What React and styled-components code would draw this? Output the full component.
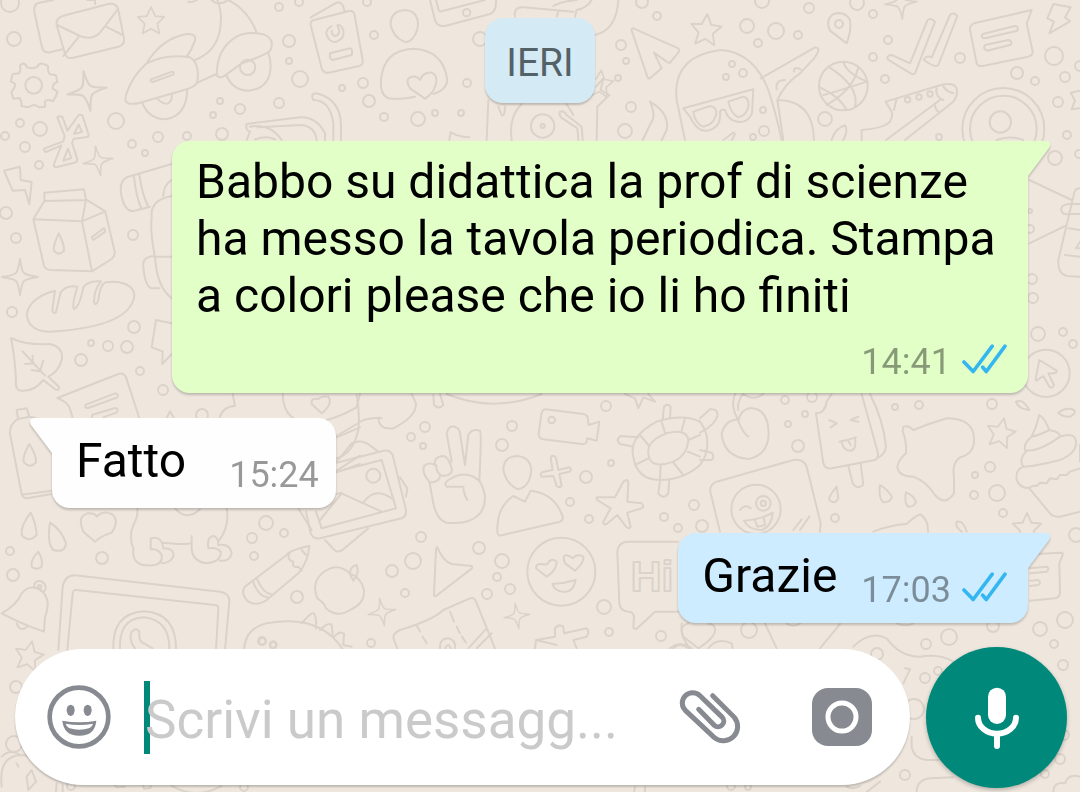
import { useState } from 'react';
import styled, { createGlobalStyle } from 'styled-components';

const GlobalStyle = createGlobalStyle`
  * {
    box-sizing: border-box;
  }

  body {
    margin: 0;
    background: #efe7de;
    font-family: Roboto, "Liberation Sans", sans-serif;
  }
`;

const Screen = styled.div`
  position: relative;
  display: flex;
  flex-direction: column;
  min-height: 100vh;
  overflow: hidden;
`;

const Doodles = styled.svg`
  position: absolute;
  top: 0;
  left: 0;
  z-index: 0;
  fill: none;
  stroke: #dbd3ca;
  stroke-width: 6;
  stroke-linecap: round;
  stroke-linejoin: round;
  pointer-events: none;
`;

const Chat = styled.main`
  position: relative;
  flex: 1;
  display: flex;
  flex-direction: column;
  gap: 25px;
  padding: 18px 52px 24px;
`;

const DateChip = styled.time`
  align-self: center;
  margin-bottom: 13px;
  padding: 23px 21px 17px;
  border-radius: 18px;
  background: #d4eaf4;
  box-shadow: 0 2px 2px rgba(0, 0, 0, 0.2);
  color: #546166;
  font-size: 39px;
  line-height: 45px;
`;

const Bubble = styled.article`
  position: relative;
  display: flex;
  flex-direction: ${(p) => (p.$stacked ? 'column' : 'row')};
  align-self: ${(p) => (p.$mine ? 'flex-end' : 'flex-start')};
  column-gap: ${(p) => (p.$mine ? '24px' : '43px')};
  row-gap: 16px;
  max-width: calc(100% - 120px);
  padding: ${(p) => (p.$stacked ? '12px 21px 9px 24px' : p.$mine ? '14px 21px 11px 24px' : '14px 17px 11px 24px')};
  border-radius: ${(p) => (p.$mine ? '18px 0 18px 18px' : '0 18px 18px 18px')};
  background: ${(p) => p.$color};
  filter: drop-shadow(0 2px 1px rgba(0, 0, 0, 0.2));
`;

const Tail = styled.svg`
  position: absolute;
  top: 0;
  ${(p) => (p.$mine ? 'right: -22px;' : 'left: -22px; transform: scaleX(-1);')}
  width: 23px;
  height: 36px;
  fill: ${(p) => p.$color};
`;

const Text = styled.p`
  margin: 0;
  color: #000;
  font-size: 48px;
  line-height: 57px;
`;

const Meta = styled.div`
  display: flex;
  align-items: center;
  align-self: flex-end;
  gap: 11px;
  margin-top: ${(p) => (p.$stacked ? '0' : '21px')};
  color: rgba(0, 0, 0, 0.4);
  font-size: 36px;
  line-height: 44px;
`;

const Ticks = styled.svg`
  width: 45px;
  height: 30px;
  margin-bottom: 6px;
  fill: none;
  stroke: #34b7f1;
  stroke-width: 11;
  stroke-linecap: round;
  stroke-linejoin: round;
`;

const Footer = styled.form`
  position: relative;
  display: flex;
  align-items: flex-start;
  gap: 16px;
  padding: 0 13px 4px 15px;
`;

const Composer = styled.div`
  flex: 1;
  min-width: 0;
  display: flex;
  align-items: center;
  height: 136px;
  margin-top: 2px;
  padding: 0 38px 0 32px;
  border-radius: 68px;
  background: #fff;
  box-shadow: 0 2px 2px rgba(0, 0, 0, 0.2);
`;

const IconButton = styled.button`
  display: flex;
  flex: none;
  margin: 0;
  padding: 0;
  border: 0;
  background: none;
  color: #878b91;
  cursor: pointer;
`;

const Field = styled.label`
  position: relative;
  flex: 1;
  min-width: 0;
  margin: 0 16px 0 33px;

  &::before {
    content: '';
    position: absolute;
    top: 1px;
    left: 0;
    width: 6px;
    height: 73px;
    background: #00897b;
  }
`;

const Input = styled.input`
  position: relative;
  display: block;
  width: 100%;
  height: 74px;
  padding: 6px 0 0 1px;
  border: 0;
  outline: 0;
  background: transparent;
  color: #000;
  caret-color: transparent;
  font: 53px/68px Roboto, "Liberation Sans", sans-serif;

  &::placeholder {
    color: #cacaca;
    opacity: 1;
  }
`;

const Tools = styled.div`
  display: flex;
  align-items: center;
  gap: 69px;
`;

const MicButton = styled.button`
  display: flex;
  flex: none;
  align-items: center;
  justify-content: center;
  width: 141px;
  height: 141px;
  padding: 0;
  border: 0;
  border-radius: 50%;
  background: #00897b;
  box-shadow: 0 2px 4px rgba(0, 0, 0, 0.25);
  cursor: pointer;
`;

const messages = [
  {
    id: 1,
    mine: true,
    stacked: true,
    color: '#e1ffc7',
    text: 'Babbo su didattica la prof di scienze ha messo la tavola periodica. Stampa a colori please che io li ho finiti',
    time: '14:41',
  },
  { id: 2, mine: false, color: '#fefefe', text: 'Fatto', time: '15:24' },
  { id: 3, mine: true, color: '#cdecff', text: 'Grazie', time: '17:03' },
];

// x, y, radius
const dots = [
  [10, 3, 9], [14, 39, 7], [116, 121, 8], [40, 129, 7], [20, 123, 4], [5, 136, 4], [25, 147, 5], [39, 165, 4],
  [158, 137, 5], [132, 144, 4], [145, 153, 3], [187, 136, 4], [222, 134, 6], [220, 101, 3], [240, 109, 5], [213, 115, 3],
  [279, 103, 5], [279, 7, 4], [299, 2, 4], [289, 41, 6], [289, 61, 3], [300, 79, 8], [342, 88, 3], [363, 83, 5],
  [374, 35, 4], [369, 101, 6], [384, 117, 4], [418, 119, 7], [435, 113, 3], [461, 113, 3], [467, 83, 4], [480, 39, 7],
  [367, 2, 4], [6, 213, 6], [16, 238, 5], [133, 235, 5], [12, 312, 5], [134, 327, 6], [127, 347, 6], [108, 346, 5],
  [91, 343, 3], [81, 360, 6], [140, 371, 4], [163, 390, 5], [202, 415, 6],
  [642, 2, 6], [657, 16, 4], [621, 45, 5], [626, 61, 3], [618, 78, 3], [631, 107, 5], [625, 131, 7],
  [762, 1, 7], [747, 26, 7], [776, 31, 8], [798, 35, 4], [758, 43, 4], [809, 8, 5], [873, 14, 4], [857, 3, 7],
  [888, 40, 4], [873, 57, 4], [885, 79, 4], [825, 119, 7], [764, 131, 5], [763, 110, 3], [753, 137, 3], [960, 58, 5],
  [1054, 56, 9], [1017, 73, 6], [1035, 81, 4], [1065, 77, 5], [1058, 102, 5], [1067, 135, 4], [1055, 158, 7], [1079, 154, 4],
  [732, 64, 3], [743, 73, 4], [726, 77, 3], [939, 137, 3], [1080, 66, 5],
  [1030, 229, 4], [1032, 279, 5], [1033, 298, 5], [1038, 334, 7], [1063, 332, 4], [1073, 344, 4], [1030, 211, 2],
  [411, 437, 4], [425, 427, 5], [423, 446, 3], [512, 426, 5], [502, 445, 6], [606, 406, 5], [611, 463, 3], [586, 477, 6],
  [570, 502, 4], [589, 519, 4], [694, 505, 5], [664, 517, 4], [678, 528, 4], [421, 537, 5], [479, 548, 6], [413, 561, 8],
  [392, 571, 6], [405, 593, 4], [502, 561, 7], [497, 577, 4], [510, 589, 5], [487, 594, 5], [604, 607, 7], [371, 643, 4],
  [609, 632, 4], [661, 636, 5],
  [785, 400, 4], [812, 397, 5], [805, 414, 3], [788, 424, 3], [798, 446, 6], [895, 407, 3], [919, 405, 4], [992, 404, 5],
  [990, 467, 5], [975, 475, 3], [974, 495, 4], [997, 493, 8], [1003, 513, 4], [835, 518, 4], [702, 526, 6], [1076, 535, 7],
  [266, 523, 7], [252, 538, 5], [284, 533, 4], [254, 556, 4], [297, 597, 6], [102, 558, 6], [10, 551, 4], [13, 575, 6],
  [16, 687, 6], [14, 744, 8], [262, 641, 4], [273, 645, 3],
  [749, 630, 8], [926, 644, 5], [949, 637, 8], [1040, 629, 7], [1065, 620, 8], [1054, 644, 4], [1063, 665, 5],
  [877, 654, 6], [925, 678, 5], [938, 671, 4], [914, 709, 10], [905, 775, 5], [1060, 759, 5], [993, 626, 6],
  [1064, 735, 5], [731, 786, 4], [748, 787, 3], [71, 786, 4], [244, 787, 4], [1045, 774, 4],
];

// x, y, radius, rotation
const sparkles = [
  [87, 91, 20, -10], [98, 161, 15, -10], [20, 277, 18, 0], [901, 3, 16, -5], [382, 612, 14, -10], [517, 616, 13, -8],
];

// x, y, radius, rotation
const stars = [
  [151, 21, 14, 0], [706, 30, 16, 5], [1001, 433, 15, 12], [29, 656, 15, 12], [1027, 528, 15, 0], [600, 84, 14, 5],
];

function Wallpaper() {
  return (
    <Doodles width="1080" height="792" viewBox="0 0 1080 792" aria-hidden="true">
      <g strokeWidth="1.9">
        {dots.map(([x, y, r]) => (
          <circle key={`${x}-${y}`} cx={x} cy={y} r={r} />
        ))}
      </g>
      {sparkles.map(([x, y, r, a]) => (
        <path
          key={`${x}-${y}`}
          transform={`translate(${x} ${y}) rotate(${a}) scale(${r / 20})`}
          strokeWidth="2.2"
          d="M0 -20Q2 -5 5 -4Q8 -2 20 0Q6 2 4 5Q2 8 0 20Q-2 6 -5 4Q-8 2 -20 0Q-6 -2 -4 -5Q-2 -8 0 -20Z"
        />
      ))}
      {stars.map(([x, y, r, a]) => (
        <path
          key={`${x}-${y}`}
          transform={`translate(${x} ${y}) rotate(${a}) scale(${r / 20})`}
          strokeWidth="2.4"
          d="M0 -20L6 -7L19 -6L9 4L12 18L0 11L-12 18L-9 4L-19 -6L-6 -7Z"
        />
      ))}

      {/* mail, scooter, gear, milk, headphones */}
      <g transform="scale(.33333)">
        <path d="M188 148L150 157Q130 160 126 142L103 35Q100 12 118 8L160 0M262 0L285 0V12" />
        <path d="M190 47L325 12Q350 8 355 30L372 115Q375 135 355 140L220 173Q198 178 194 158L170 75Q167 55 190 47ZM172 75L240 108Q275 122 300 98L352 30M190 168L235 112M368 105L318 80" />
        <path d="M385 310Q372 305 378 285Q395 230 440 190Q500 160 570 172Q600 190 592 245Q590 258 560 268L420 308Q400 314 385 310ZM453 238L516 215Q524 216 520 224L458 246Q448 244 453 238Z" />
        <path d="M440 190Q485 115 560 102Q590 100 585 122Q575 150 560 170M428 310Q445 355 495 358Q560 350 562 268M472 296Q490 315 505 310Q518 300 515 284" />
        <path d="M585 180Q665 150 663 50Q660 20 652 0M685 0Q745 30 770 98M635 0Q655 20 685 0M565 5Q580 8 590 0M592 248L650 222" />
        <path d="M650 225Q655 235 670 230L725 190Q800 165 812 150Q825 115 790 103Q740 92 710 110Q650 145 650 225ZM680 228Q700 272 745 272Q810 265 812 200Q812 180 805 158" />
        <circle cx="743" cy="202" r="23" />
        <circle cx="101" cy="256" r="25" />
        <path d="M68 190Q78 192 82 202Q101 208 112 200Q118 188 128 191L144 198Q142 212 148 222L168 226L172 246Q156 252 158 266L172 274Q170 290 158 304Q142 296 134 304L136 320L116 322Q104 308 86 322L64 318Q66 304 58 294L40 296L34 276Q46 262 46 252L32 244L38 222L58 220Q64 208 60 196Z" />
        <path d="M172 352Q180 346 188 352L202 392L236 345Q244 342 248 348L266 405Q266 412 258 412L222 416L216 428L232 478Q232 486 224 488L168 502Q160 500 162 492L184 436L138 456Q130 454 132 446L190 424L194 408ZM236 374L246 396L222 402ZM204 446L214 474L190 482Z" />
        <path d="M12 512L60 500L62 540L95 546L88 612L75 570L38 572Z" />
        <path d="M133 578L252 568L258 600L133 603ZM133 603L100 658L246 664L258 600M100 658L132 798Q136 808 150 810L276 814L246 664M258 598L316 634L246 664M316 634L344 755Q345 770 335 777L276 814M275 712L312 684L316 695L280 720ZM176 700Q158 740 162 752Q176 770 192 752Q194 735 176 700Z" />
        <path d="M515 492L380 532Q355 545 365 590Q375 635 400 633L450 620M402 530Q408 590 425 628M418 525Q428 590 445 620M515 540Q490 555 490 588M515 588Q450 600 455 650Q450 700 465 770L515 770M465 768Q425 770 430 800Q435 860 455 865L478 865M465 770Q470 860 515 895" />
      </g>

      {/* phone book, face, cassette top */}
      <g transform="translate(170) scale(.33333)">
        <path d="M432 60L540 32Q550 32 553 42L578 180Q580 195 568 198L475 218Q460 220 455 205L422 75Q420 62 432 60ZM422 52L500 8Q515 5 520 20L524 36M480 160L540 145Q548 146 546 160L545 165L488 180Q478 178 480 160Z" />
        <path d="M485 78Q465 90 470 105Q480 130 500 125Q525 115 520 90Q512 72 502 76L508 92Q508 105 495 108Q482 104 486 92" />
        <path d="M703 30Q660 35 662 75Q670 110 700 124Q715 130 728 115Q748 90 743 60Q735 30 703 30ZM650 292Q630 280 633 240Q640 150 730 146Q820 150 832 240Q830 270 790 282M650 292Q665 302 735 290M765 296L720 265Q705 240 720 232Q740 225 750 240Q760 215 785 218Q805 225 797 255Q790 280 765 296Z" />
        <path d="M780 0L795 60Q800 80 825 78L960 42Q980 35 978 0M798 0L806 30Q808 36 815 34L945 0" />
        <circle cx="890" cy="38" r="11" />
        <path d="M230 372L390 352Q440 350 465 400V420M230 372Q225 390 240 395L230 420M240 380Q300 370 335 420M262 382L395 375Q435 380 440 420M255 418Q290 405 315 418M430 300Q420 280 440 280Q515 300 513 380V420M430 300Q480 300 490 370V420M955 300L950 420M838 420L842 396Q860 410 898 412" />
      </g>

      {/* vinyl, paper plane, hood */}
      <g transform="translate(360) scale(.33333)">
        <path d="M465 50Q460 20 490 22L640 35M580 18Q600 5 650 0M590 50L595 35M645 50L650 30Q680 25 695 0M705 105Q770 90 775 0M415 320L425 345Q435 350 435 320M455 420Q445 350 485 312M620 312L640 345M600 335Q610 330 620 345L665 380L668 420M600 335Q595 350 612 358L652 385L655 420M710 420L712 320L748 285L722 270L730 235L708 260" />
        <circle cx="548" cy="378" r="35" />
        <circle cx="548" cy="378" r="6" />
        <path d="M820 85L955 145Q960 150 955 158L930 188Q925 190 920 185L882 158L905 205L870 235Q865 238 862 230L815 92Q814 84 820 85ZM870 305Q930 340 920 390L905 420M870 305Q890 350 872 370L848 420" />
        <path d="M975 420L950 300Q935 170 1080 150Q1180 155 1225 270Q1248 340 1265 420M970 325L1180 268L1176 340Q1165 365 1140 366Q1105 365 1095 330Q1085 325 1080 335Q1085 385 1040 392Q1010 395 990 350ZM1000 335L1050 318Q1072 320 1068 345Q1060 375 1030 380Q1005 372 1000 335ZM1105 305L1150 290Q1168 292 1165 320Q1158 348 1135 352Q1112 340 1105 305Z" />
      </g>

      {/* pin, ball, ticks, message, sneaker */}
      <g transform="translate(720) scale(.33333)">
        <path d="M380 130L330 92Q315 60 340 42Q375 32 390 60Q395 90 380 130Z" />
        <circle cx="357" cy="72" r="12" />
        <path d="M122 235L285 142Q298 142 294 155L285 172L240 220Q195 250 172 300Q280 300 282 420M172 300L190 420M170 268Q165 240 195 240M222 215Q220 198 242 208" />
        <circle cx="370" cy="258" r="73" />
        <path d="M325 200Q420 260 405 320M300 262Q360 290 380 330M415 202Q400 270 320 315M440 245Q350 275 310 285M370 186Q380 220 442 245" />
        <path d="M503 178Q500 165 515 165L570 190L622 62Q630 50 645 65L585 220Q580 225 572 220ZM612 180Q615 165 635 172L690 45Q700 35 712 48L655 195Q645 205 612 180Z" />
        <path d="M935 30L762 70Q748 75 750 90L770 190Q775 200 788 198L925 170Q940 165 938 155L920 70ZM788 102L885 78Q898 80 892 92L795 115Q780 113 788 102ZM795 135L865 120Q880 124 872 134L802 152Q788 148 795 135Z" />
        <path d="M1000 12L1052 22L1035 52L1050 64L988 100L1002 65L982 55Z" />
        <path d="M425 420L425 390Q490 385 510 365Q520 345 515 335L497 305L640 262Q700 240 710 265Q715 285 700 305L555 420M530 295L522 330M650 265Q645 290 670 300M670 260Q680 275 700 280M498 420L660 300M645 310Q645 330 655 335M335 420Q345 385 375 376Q385 390 370 420M10 420L40 398Q50 400 35 420" />
        <circle cx="563" cy="299" r="8" />
        <circle cx="597" cy="291" r="8" />
        <circle cx="630" cy="282" r="8" />
        <circle cx="850" cy="387" r="123" />
        <circle cx="850" cy="387" r="100" />
        <path d="M830 420Q870 405 910 420" />
        <circle cx="841" cy="366" r="32" />
        <path d="M1080 272L1052 278L1065 302L1055 328L1080 325M928 540L1055 600M928 730L1035 678M1080 565Q1062 565 1060 590L1015 780Q1012 820 1040 828L1080 830M1045 612Q1020 615 1024 632Q1028 645 1045 642H1080M1045 612H1080M1045 685L1080 690M1035 765L1080 770M1080 725L1068 745L1080 745" />
      </g>

      {/* bread, leaf, note, bottle */}
      <g transform="translate(0 264) scale(.33333)">
        <path d="M165 80Q90 100 80 150Q85 210 170 202Q330 190 380 140Q420 95 390 68Q360 48 318 55Q300 60 295 110Q285 130 282 112Q283 75 303 52Q265 48 250 70Q238 130 222 135Q215 125 232 68Q200 62 182 85L168 145Q155 152 158 130L165 80" />
        <path d="M33 222Q80 245 150 240Q190 250 186 285Q175 325 145 338L178 370Q178 380 165 376L130 348Q100 385 62 380Q45 378 48 350Q45 280 33 222ZM68 262L135 335M75 300L102 298M95 318L120 322L130 290M98 298V275" />
        <path d="M172 402L355 330Q370 325 378 340L418 462M172 402Q205 415 210 435L218 462M258 422L345 388Q358 390 352 400L265 432Q250 432 258 422ZM275 460Q275 450 285 450L345 432Q358 435 350 445L310 460" />
        <path d="M515 178L468 168L455 250L488 262L487 300L515 270" />
        <path d="M50 438L80 433L88 458L54 465ZM54 465Q28 480 30 510L65 690Q70 705 85 702L155 690M88 458Q110 460 125 470M65 692L155 680M88 540Q65 580 72 595Q90 615 108 595Q110 575 88 540Z" />
        <path d="M500 462L510 442L522 462M660 460Q665 430 705 425L698 390M848 390Q850 480 940 475Q1000 470 1070 430L1080 390M965 448L935 420Q932 400 955 405Q965 395 985 398Q1000 420 965 448ZM1010 520L1080 490M1010 625L1080 600M1010 620L1080 575" />
      </g>

      {/* photo frame, victory hand, contact, camera, lifebuoy, stickers */}
      <g transform="translate(300 390) scale(.33333)">
        <path d="M110 205Q160 190 175 120Q180 70 170 15M110 215L155 160Q185 145 215 170L235 185M110 138L190 90Q240 80 245 85M235 88Q240 120 280 115Q350 80 348 40L335 12M400 15L402 45Q415 60 430 45L420 12M440 12Q580 70 725 12" />
        <path d="M110 218L250 182Q270 178 278 195L318 360Q320 378 305 385L60 445Q40 448 32 430L18 365M110 245L245 210L288 355L65 415L48 365M60 390L125 310L245 365M192 335Q225 290 275 325M110 312L125 308M300 262L322 295L318 320M75 450L105 482Q115 488 130 478L205 415" />
        <circle cx="220" cy="257" r="21" />
        <path d="M455 215L440 130Q445 105 465 110Q478 115 480 130L495 225L505 135Q515 115 540 122Q545 130 538 275M440 290Q430 280 445 270Q500 235 540 275Q570 330 540 370Q510 405 440 398Q410 390 400 340L388 275Q365 250 372 228Q385 215 405 225Q400 200 430 198Q445 200 455 235Q460 255 430 258Q410 255 408 225M440 290L490 290Q490 310 502 330M420 258Q420 275 390 278" />
        <path d="M650 198Q610 200 610 240Q620 285 655 298Q690 290 694 240Q690 200 650 198ZM675 335L640 318Q590 350 592 425Q592 438 605 436L780 395Q790 392 788 380Q765 310 692 302ZM755 198Q765 195 768 205L775 240L808 232Q818 238 808 245L778 252L785 288Q778 295 770 288L760 258L725 260Q718 252 728 246L758 240L752 205Z" />
        <path d="M738 58L850 72Q865 75 864 90L866 105L898 95L890 152L862 145Q860 165 845 162L730 148Q715 145 716 130L724 72Q727 58 738 58Z" />
        <circle cx="755" cy="90" r="10" />
        <path d="M1000 200Q985 140 1070 95Q1150 70 1200 95M1000 200Q1010 270 1080 270Q1150 270 1200 225M1048 205Q1030 155 1100 130Q1160 115 1165 150Q1160 210 1095 222Q1055 228 1048 205ZM1020 135L1045 165M1085 95L1095 128M1155 85L1145 122M1005 225L1045 205M1080 270L1082 225M1120 218L1150 255M1163 185L1200 200M1165 150L1200 135M1088 88L1092 50Q1102 38 1112 50L1110 85M1000 170L960 162Q945 150 962 138L1015 142M1080 272L1075 310Q1090 330 1105 310L1108 268M975 12L1005 25L1015 55L1030 22L1065 35L1045 12" />
        <path d="M1200 95Q1225 130 1222 165Q1220 200 1200 225" />
        <path d="M978 270Q985 270 985 280L982 335L1025 340Q1035 350 1025 355L982 368L992 410Q988 420 978 410L952 375L920 402Q908 405 910 395L932 355L892 330Q885 320 898 322L945 322L970 275Z" />
        <path d="M150 550Q115 520 80 540Q30 570 52 625Q75 640 78 655Q110 685 150 660Q195 640 192 600Q185 565 150 550ZM150 550Q150 530 170 525Q180 550 160 572L148 550" />
        <path d="M412 472Q430 515 455 522L515 528Q520 532 512 538L408 618Q400 620 402 610L408 478Q410 470 412 472ZM282 750Q275 730 300 720Q400 690 430 660L510 625Q522 620 528 635L585 775M282 750L292 775M350 705L360 725M368 740L380 760M450 665L462 695M470 710L480 730M486 740L498 758M560 715L505 775M575 730L530 775M420 775Q418 745 445 745Q468 750 465 775M435 775Q445 755 452 775" />
        <circle cx="784" cy="545" r="102" />
        <path d="M740 560L708 535Q708 520 725 522Q738 525 742 522Q755 500 770 515Q770 540 740 560ZM825 542L795 520Q785 495 800 496Q812 498 818 505Q830 490 850 500Q855 515 825 542ZM757 582Q795 580 827 570Q820 605 795 606Q765 605 757 582Z" />
        <path d="M1135 455H985Q955 455 952 485L958 640Q960 662 985 665Q1000 665 1002 680L1000 712Q1005 722 1015 712L1065 665H1135" />
        <text x="992" y="603" fontFamily="Liberation Sans" fontWeight="bold" fontSize="128">Hi</text>
        <path d="M705 775L708 750L765 740L765 715Q775 700 790 710L792 730L860 715Q870 725 860 740L820 750L830 775M708 750L770 765M1145 700Q1140 740 1170 775M1120 775Q1140 755 1165 775" />
      </g>

      {/* cherries, ice cream, cupcake */}
      <g transform="translate(700 330) scale(.33333)">
        <path d="M0 265L30 238Q55 235 52 258Q45 285 0 308M0 360L35 368Q45 380 35 390L0 390M115 270Q80 265 65 310Q70 380 145 387Q205 375 206 310Q205 235 150 234Q120 240 115 275Q130 310 145 320M115 270Q90 230 105 192M128 192Q110 220 115 240M130 192Q160 215 190 192" />
        <path d="M348 250Q375 250 380 215L395 192M348 250L370 400Q375 418 395 415L525 390Q535 385 534 370L485 192M510 192Q550 270 558 350Q555 375 530 385M445 408L458 460Q470 480 490 465L482 400M388 270L410 280L392 292M475 260L452 270L475 275M418 335Q445 330 468 322M425 335Q430 365 455 362Q470 355 465 325M445 332L452 345" />
        <path d="M610 290Q625 285 640 300Q690 280 740 265Q820 265 822 325Q825 370 780 382Q755 400 762 440L762 490Q735 530 705 495Q680 455 640 440Q595 440 592 410Q595 390 618 370Q620 330 608 305ZM60 605L32 490Q25 465 50 455L280 390Q310 385 320 410L362 580L360 605" />
        <circle cx="168" cy="538" r="74" />
        <circle cx="190" cy="520" r="22" />
        <circle cx="190" cy="520" r="8" />
        <path d="M120 540Q135 520 152 535M132 572Q180 570 218 548Q215 590 185 600Q145 600 132 572ZM165 572L172 590L195 585L192 565M280 600L305 568M300 600L328 560M410 470Q385 500 388 510Q405 525 415 505ZM540 465Q535 505 550 517Q575 515 575 500Q565 480 540 465ZM618 487Q612 520 625 530Q645 530 648 515Q640 495 618 487ZM520 605Q570 585 620 582Q650 555 662 553Q685 570 684 605M770 575Q790 570 800 605M770 575Q765 590 785 605" />
        <path d="M948 215Q970 205 988 240Q955 238 948 215ZM1075 248Q1100 230 1122 240Q1130 250 1110 260Q1090 262 1075 248ZM1018 255Q1035 265 1048 300Q1020 315 995 320Q1010 290 1018 255ZM995 320Q970 340 975 360Q1010 370 1080 320Q1080 305 1048 300M1080 320Q1125 305 1128 335Q1130 370 1080 390Q1000 410 970 410Q955 390 978 365M970 410Q945 420 950 450Q965 480 990 472Q1000 465 1010 468L1020 458L1040 460L1050 445L1070 448L1080 435L1100 435L1110 425L1140 415M1140 345V395M988 475L1050 550Q1060 562 1080 560L1140 545" />
        <circle cx="1038" cy="130" r="71" />
        <path d="M1018 90L1070 122Q1072 132 1045 130L1062 165Q1058 178 1048 170L1030 138L1010 152Q1005 150 1008 140Z" />
        <path d="M1010 672L1080 668Q1092 668 1088 675L1078 700L1080 790Q1078 802 1065 805L990 812M990 715L1040 710Q1050 716 1040 725L990 730M990 752L1015 750Q1025 758 1015 765L990 768" />
      </g>

      {/* drops, dog, pencil, bell, tablet, whale */}
      <g transform="translate(0 500) scale(.33333)">
        <path d="M92 38Q60 80 65 105Q85 130 110 105Q108 70 92 38ZM150 68Q140 130 160 150Q195 160 198 130Q185 90 150 68ZM115 155Q90 180 95 200Q110 212 125 200Q130 180 115 155ZM285 125L250 95Q230 50 262 40Q285 38 290 50Q310 30 335 42Q360 60 335 98Q300 110 285 125Z" />
        <path d="M412 25Q415 50 400 75Q385 110 400 145Q395 195 440 196Q490 200 485 165Q475 145 452 148V115Q485 105 490 145Q525 145 520 170Q510 190 485 190M490 128Q550 135 575 130M575 108V150Q580 185 620 190Q665 185 662 155Q650 140 625 145Q620 110 640 108Q655 110 655 135Q690 130 695 160Q690 185 660 182M655 125Q690 80 680 25M525 25Q560 65 600 28" />
        <path d="M928 138Q870 150 860 165L735 260Q720 280 745 305Q770 320 800 300L895 220Q925 185 928 138ZM868 160Q860 180 880 185Q875 205 895 200L905 212M758 242Q775 290 802 292M770 235Q790 280 812 282M905 150L918 165M895 25L935 90" />
        <path d="M5 340Q50 315 65 280Q90 250 125 272Q155 300 135 350L132 395Q60 370 5 340ZM50 370Q60 398 82 380M103 262Q102 242 120 243Q138 248 137 265Q132 280 122 272" />
        <circle cx="119" cy="260" r="5" />
        <path d="M175 450L188 260Q195 225 225 226L660 275Q690 280 688 305L675 450M202 450L218 280Q220 268 230 270L645 315Q655 315 655 325L648 450M340 450Q335 340 432 334Q530 340 528 450M360 450Q355 355 432 352Q510 360 508 450M395 395Q410 380 418 395L418 415Q425 430 432 430L458 445M395 395Q385 420 405 445" />
        <path d="M732 450Q735 385 800 370Q960 340 1030 450M905 370Q935 335 940 340Q950 345 948 385M960 390Q985 365 995 375L998 405M1002 410Q1020 390 1032 402L1030 435L1055 440" />
        <circle cx="787" cy="424" r="10" />
        <circle cx="820" cy="434" r="10" />
        <path d="M5 860Q-5 770 60 765Q100 765 115 790M80 830L95 810L108 845L85 870ZM50 790L55 800M5 770Q30 745 60 765M170 850L168 876M188 855L188 876M345 856L350 862L375 860M430 858L432 866L452 864L452 856M515 858Q590 900 665 858" />
      </g>

      {/* flower, shoreline and clouds around the mic */}
      <g transform="translate(620 600) scale(.33333)">
        <path d="M235 145L190 110Q175 80 205 70M235 145Q290 110 285 85Q280 70 265 72M150 145Q180 120 215 145M265 145Q290 110 335 130L338 145M435 70L470 145M500 70Q520 85 540 70M660 72L600 145M830 70Q860 82 880 70M700 140Q750 90 800 115Q840 170 900 170Q960 160 1000 185M855 205L870 208L850 250M875 410L875 440Q880 475 920 480L955 480M890 576Q890 540 930 535L1000 532M1300 576Q1300 545 1335 550Q1345 520 1380 530M740 576L780 545M45 560L42 576M75 560V576M680 560Q700 570 720 558" />
      </g>
    </Doodles>
  );
}

function SmileIcon() {
  return (
    <svg width="64" height="64" viewBox="140 557 192 192" fill="currentColor" aria-hidden="true">
      <circle cx="236" cy="653" r="88" fill="none" stroke="currentColor" strokeWidth="14" />
      <ellipse cx="211" cy="633" rx="12" ry="17" />
      <ellipse cx="262" cy="633" rx="12" ry="17" />
      <path d="M186 664Q237 674 288 664Q284 709 237 709Q190 709 186 664Z" />
      <path d="M196 673Q237 681 278 673Q276 681 268 686Q237 696 206 686Q198 681 196 673Z" fill="#fff" />
    </svg>
  );
}

function ClipIcon() {
  return (
    <svg width="64" height="56" viewBox="54 147 192 168" fill="none" stroke="currentColor" strokeWidth="15" strokeLinecap="round" aria-hidden="true">
      <path d="M155 167L220 232A43 43 0 0 1 160 293L73 211A31 31 0 0 1 117 167L184 232A17 17 0 0 1 160 256L113 208" />
    </svg>
  );
}

function CameraIcon() {
  return (
    <svg width="60" height="58" viewBox="0 0 60 58" aria-hidden="true">
      <rect width="60" height="58" rx="16" fill="currentColor" />
      <circle cx="30" cy="29" r="14" fill="none" stroke="#fff" strokeWidth="5" />
    </svg>
  );
}

function MicIcon() {
  return (
    <svg width="46" height="64" viewBox="942 138 138 192" fill="none" stroke="#fff" strokeWidth="18" strokeLinecap="round" aria-hidden="true">
      <rect x="984" y="143" width="54" height="109" rx="27" fill="#fff" stroke="none" />
      <path d="M954 233A57 48 0 0 0 1068 233M1011 283V318" />
    </svg>
  );
}

function Message({ mine, stacked, color, text, time }) {
  return (
    <Bubble $mine={mine} $stacked={stacked} $color={color}>
      <Tail $mine={mine} $color={color} viewBox="0 0 23 36" aria-hidden="true">
        <path d="M0 0H19Q25 1 22 7L1 35H0Z" />
      </Tail>
      <Text>{text}</Text>
      <Meta $stacked={stacked}>
        <time>{time}</time>
        {mine && (
          <Ticks viewBox="785 43 137 90" role="img" aria-label="Letto">
            <path d="M791 97L819 126L877 49M848 113L859 126L916 49" />
          </Ticks>
        )}
      </Meta>
    </Bubble>
  );
}

export default function App() {
  const [draft, setDraft] = useState('');

  return (
    <>
      <GlobalStyle />
      <Screen>
        <Wallpaper />
        <Chat>
          <DateChip>IERI</DateChip>
          {messages.map((m) => (
            <Message key={m.id} {...m} />
          ))}
        </Chat>
        <Footer onSubmit={(e) => e.preventDefault()}>
          <Composer>
            <IconButton type="button" aria-label="Emoji">
              <SmileIcon />
            </IconButton>
            <Field>
              <Input
                aria-label="Messaggio"
                placeholder="Scrivi un messagg..."
                value={draft}
                onChange={(e) => setDraft(e.target.value)}
              />
            </Field>
            <Tools>
              <IconButton type="button" aria-label="Allega">
                <ClipIcon />
              </IconButton>
              <IconButton type="button" aria-label="Fotocamera">
                <CameraIcon />
              </IconButton>
            </Tools>
          </Composer>
          <MicButton type="button" aria-label="Messaggio vocale">
            <MicIcon />
          </MicButton>
        </Footer>
      </Screen>
    </>
  );
}
